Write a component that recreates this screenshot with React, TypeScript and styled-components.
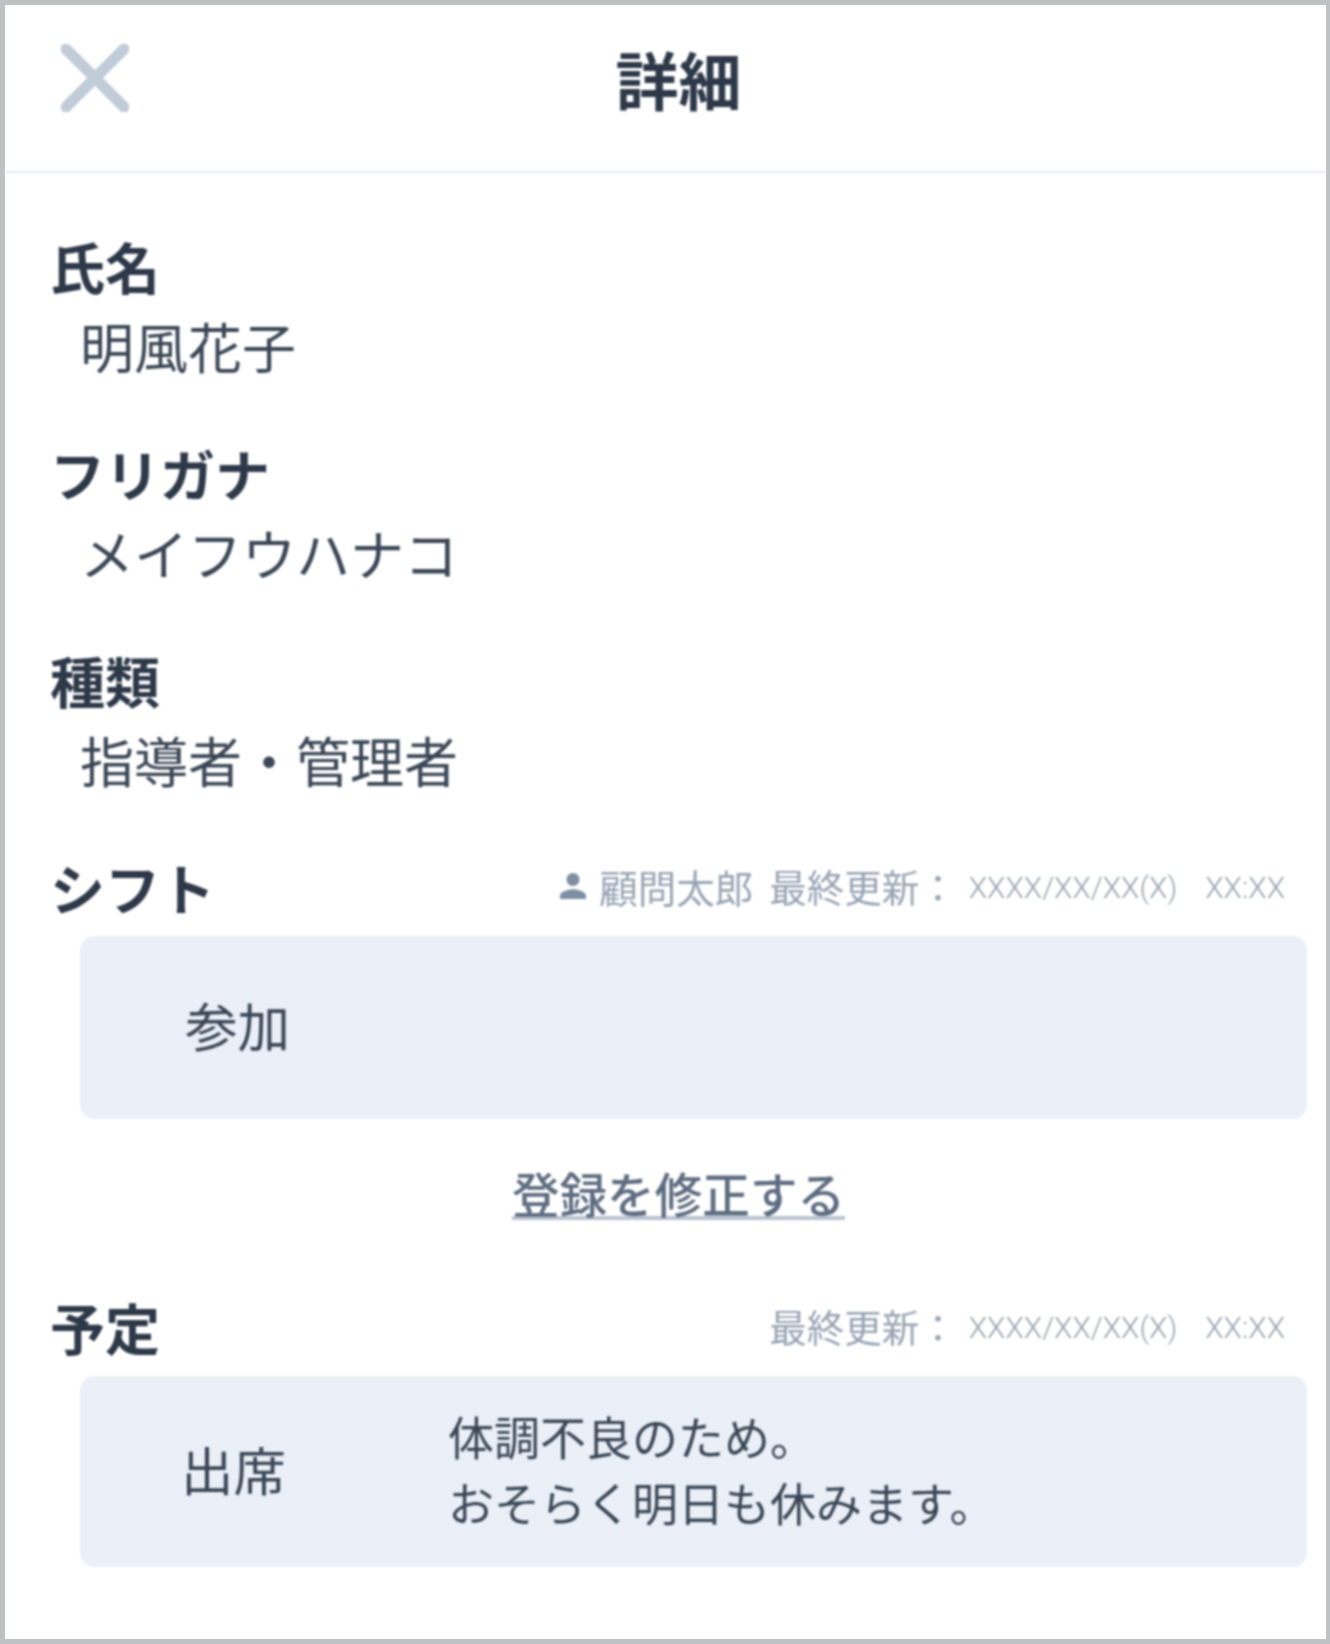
import * as React from 'react';
import styled, { createGlobalStyle } from 'styled-components';

const GlobalStyle = createGlobalStyle`
  html, body {
    margin: 0;
    padding: 0;
    background: #fff;
  }
`;

const Frame = styled.div`
  box-sizing: border-box;
  width: 1330px;
  height: 1644px;
  border: solid #bfc1c3;
  border-width: 5px 4px 5px 5px;
  background: #fff;
  color: #2d3848;
  font-family: 'Noto Sans CJK JP', 'Noto Sans', sans-serif;
`;

// the whole reference is an upscaled capture, so the content is a little soft
const Soft = styled.div`
  filter: blur(0.9px);
`;

const Header = styled.header`
  display: grid;
  grid-template-columns: 1fr auto 1fr;
  align-items: center;
  height: 166px;
  padding: 0 30px 0 56px;
  border-bottom: 2px solid #e3eaf2;
`;

const CloseButton = styled.button`
  display: block;
  width: 68px;
  height: 68px;
  padding: 0;
  margin-top: -21px;
  border: 0;
  background: none;
`;

const Title = styled.h1`
  margin: -22px 0 0;
  font-size: 63px;
  line-height: 1;
  font-weight: 700;
`;

const Body = styled.main`
  padding: 66px 19px 0 45px;
`;

const Section = styled.section`
  margin-bottom: 74px;
`;

const LabelRow = styled.div`
  display: flex;
  align-items: center;
  justify-content: space-between;
  height: 52px;
`;

const Label = styled.h2`
  margin: 0;
  font-size: 55px;
  line-height: 52px;
  font-weight: 700;
`;

const Value = styled.div`
  margin: 29px 0 0 30px;
  font-size: 54px;
  line-height: 52px;
  font-weight: 400;
  color: #3a4655;
`;

const Meta = styled.div`
  display: flex;
  align-items: center;
  padding-right: 22px;
  font-size: 37.5px;
  line-height: 1;
  color: #98a4b4;
`;

const PersonIcon = styled.svg`
  width: 26px;
  height: 26px;
  margin-right: 13px;
  fill: #7f8fa3;
`;

const Updater = styled.span`
  margin-right: 16px;
  font-size: 38.5px;
`;

const Stamp = styled.span<{ $gap?: number }>`
  margin: 4px 0 0 ${props => props.$gap ?? 0}px;
  font-family: Roboto, 'Liberation Sans', sans-serif;
  font-size: 30px;
  font-weight: 300;
  color: #98a3b0;
`;

const Card = styled.div<{ $height: number }>`
  display: flex;
  align-items: center;
  box-sizing: border-box;
  height: ${props => props.$height}px;
  margin: 24px 0 0 30px;
  padding: 0 0 7px 105px;
  border-radius: 14px;
  background: #ebf0f8;
  color: #3a4655;
`;

const Status = styled.div<{ $inset?: number }>`
  flex: 0 0 265px;
  margin-left: ${props => props.$inset ?? 0}px;
  font-size: 52.5px;
  line-height: 1;
`;

const Note = styled.div`
  margin-left: 2px;
  font-size: 46px;
  line-height: 66px;
`;

const EditLink = styled.a`
  display: block;
  width: fit-content;
  margin: 51px auto 80px;
  border-bottom: 4px solid #b9c3cf;
  font-size: 47.6px;
  line-height: 46px;
  font-weight: 500;
  color: #5d6c80;
`;

const UpdatedAt = () => (
  <>
    最終更新：
    <Stamp $gap={12}>XXXX/XX/XX(X)</Stamp>
    <Stamp $gap={28}>XX:XX</Stamp>
  </>
);

export default function App() {
  return (
    <Frame>
      <GlobalStyle />
      <Soft>
        <Header>
          <CloseButton aria-label="閉じる">
            <svg width="68" height="68" viewBox="0 0 68 68">
              <path d="M5 5 L63 63 M63 5 L5 63" stroke="#c1ccd8" strokeWidth="11" strokeLinecap="round" />
            </svg>
          </CloseButton>
          <Title>詳細</Title>
        </Header>
        <Body>
          <Section>
            <Label>氏名</Label>
            <Value>明風花子</Value>
          </Section>
          <Section>
            <Label>フリガナ</Label>
            <Value>メイフウハナコ</Value>
          </Section>
          <Section>
            <Label>種類</Label>
            <Value>指導者・管理者</Value>
          </Section>
          <LabelRow>
            <Label>シフト</Label>
            <Meta>
              <PersonIcon viewBox="4 4 16 16">
                <path d="M12 12c2.21 0 4-1.79 4-4s-1.79-4-4-4-4 1.79-4 4 1.79 4 4 4zm0 2c-2.67 0-8 1.34-8 4v2h16v-2c0-2.66-5.33-4-8-4z" />
              </PersonIcon>
              <Updater>顧問太郎</Updater>
              <UpdatedAt />
            </Meta>
          </LabelRow>
          <Card $height={183}>
            <Status>参加</Status>
          </Card>
          <EditLink>登録を修正する</EditLink>
          <LabelRow>
            <Label>予定</Label>
            <Meta>
              <UpdatedAt />
            </Meta>
          </LabelRow>
          <Card $height={191}>
            <Status $inset={-4}>出席</Status>
            <Note>
              体調不良のため。
              <br />
              おそらく明日も休みます。
            </Note>
          </Card>
        </Body>
      </Soft>
    </Frame>
  );
}
